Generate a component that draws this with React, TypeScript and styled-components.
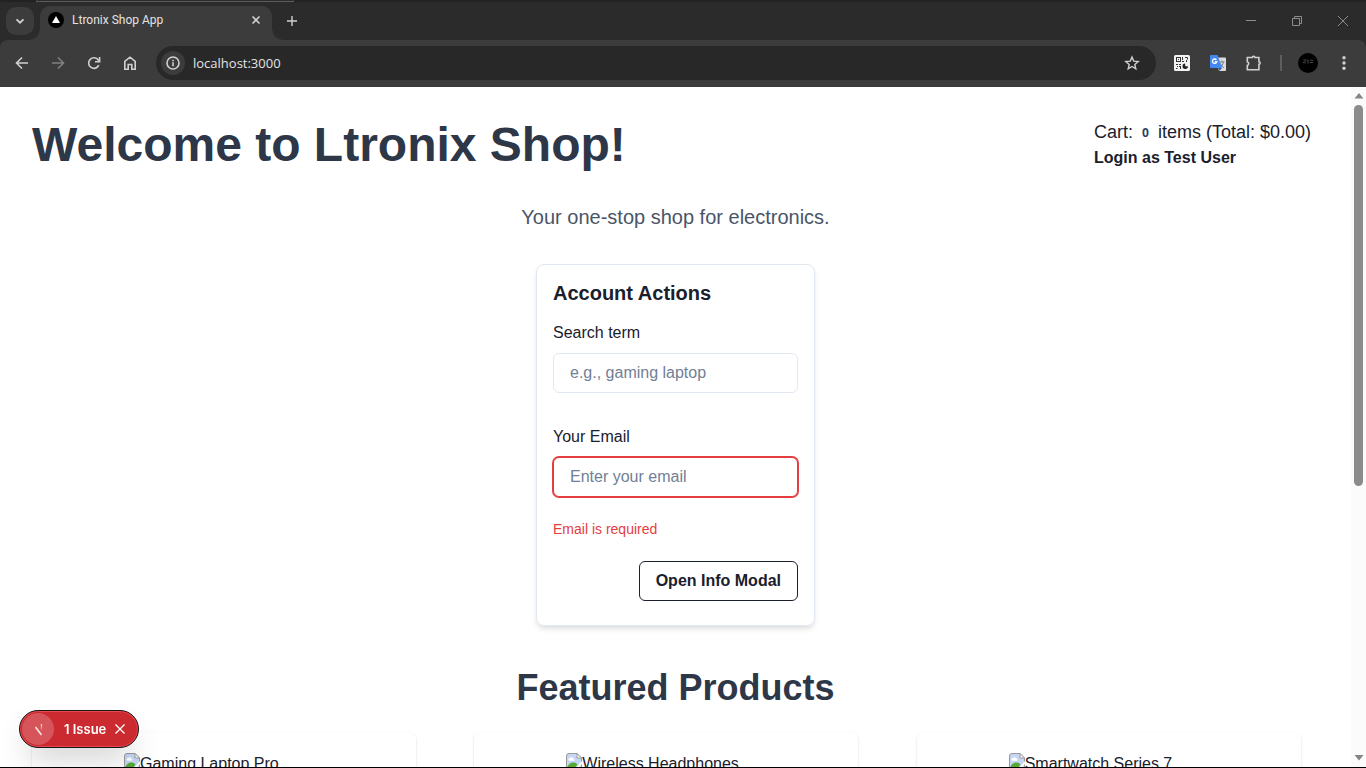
import React from "react";
import styled, { createGlobalStyle, css } from "styled-components";

const GlobalStyle = createGlobalStyle`
  *, *::before, *::after { box-sizing: border-box; }
  body {
    margin: 0;
    background: #ffffff;
    color: #1a202c;
    font-family: "Liberation Sans", Arial, sans-serif;
    font-size: 16px;
    line-height: 24px;
  }
  h1, h2, h3, p, figure { margin: 0; }
  button, input { font: inherit; color: inherit; }
  button { cursor: pointer; }
  svg { display: block; flex: none; }
`;

const Window = styled.div`
  display: flex;
  flex-direction: column;
  height: 100vh;
  overflow: hidden;
  border-bottom: 1px solid #000000;
`;

/* ---------- browser frame ---------- */

const Frame = styled.header`
  flex: none;
  background: #2b2b2b;
  font-family: "Open Sans", "Noto Sans", sans-serif;
  color: #e3e3e3;
`;

const TopEdge = styled.div`
  height: 2px;
  padding: 0 1072px 0 36px;
  background: #222222;

  &::before {
    content: "";
    display: block;
    height: 2px;
    border: 1px solid #5a5a5a;
    border-top-color: #2b2b2b;
  }
`;

const TabStrip = styled.div`
  display: flex;
  align-items: center;
  height: 38px;
  padding-left: 6px;
`;

const IconButton = styled.button<{ $size?: number; $dim?: boolean }>`
  display: flex;
  align-items: center;
  justify-content: center;
  flex: none;
  width: ${(p) => p.$size ?? 28}px;
  height: ${(p) => p.$size ?? 28}px;
  padding: 0;
  border: 0;
  border-radius: 50%;
  background: none;
  color: ${(p) => (p.$dim ? "#808080" : "#d0d0d0")};
`;

const TabSearch = styled(IconButton)`
  border-radius: 10px;
  background: #3c3c3c;
`;

const Tab = styled.div`
  position: relative;
  display: flex;
  align-items: center;
  align-self: flex-end;
  width: 232px;
  height: 34px;
  margin: 0 6px;
  padding: 0 6px 6px 8px;
  border-radius: 10px 10px 0 0;
  background: #3c3c3c;

  &::before,
  &::after {
    content: "";
    position: absolute;
    bottom: 0;
    width: 10px;
    height: 10px;
  }
  &::before {
    right: 100%;
    background: radial-gradient(circle at 0 0, transparent 9px, #3c3c3c 10px);
  }
  &::after {
    left: 100%;
    background: radial-gradient(circle at 100% 0, transparent 9px, #3c3c3c 10px);
  }
`;

const TabTitle = styled.span`
  flex: 1;
  margin-left: 8px;
  font-family: Roboto, "Open Sans", sans-serif;
  font-size: 12px;
  line-height: 16px;
  white-space: nowrap;
`;

const WindowControls = styled.div`
  display: flex;
  margin-left: auto;
`;

const WindowButton = styled.button`
  display: flex;
  align-items: center;
  justify-content: center;
  width: 46px;
  height: 34px;
  padding: 0;
  border: 0;
  background: none;
  color: #8c8c8c;
`;

const Toolbar = styled.div`
  display: flex;
  align-items: center;
  height: 47px;
  padding: 0 8px 2px;
  border-radius: 8px 8px 0 0;
  background: #3c3c3c;
`;

const NavButtons = styled.div`
  display: flex;
  gap: 8px;
`;

const AddressBar = styled.div`
  display: flex;
  align-items: center;
  flex: 1;
  height: 34px;
  margin: 0 12px;
  padding: 0 10px 0 5px;
  border-radius: 17px;
  background: #282828;
`;

const SiteInfo = styled(IconButton)`
  background: #3c3c3c;
`;

const Address = styled.input`
  flex: 1;
  min-width: 0;
  margin-left: 8px;
  padding: 0;
  border: 0;
  outline: 0;
  background: none;
  color: #e3e3e3;
  font-size: 13px;
  line-height: 20px;
`;

const Extensions = styled.div`
  display: flex;
  align-items: center;
  gap: 8px;
`;

const Divider = styled.span`
  width: 2px;
  height: 16px;
  margin: 0 4px;
  background: #5e5e5e;
`;

/* ---------- page ---------- */

const Viewport = styled.div`
  display: flex;
  flex: 1;
  min-height: 0;
`;

const Page = styled.main`
  flex: 1;
  min-width: 0;
  padding: 32px;
  overflow: hidden;
`;

const PageHeader = styled.div`
  display: flex;
  justify-content: space-between;
  align-items: flex-start;
`;

const Title = styled.h1`
  color: #2d3748;
  font-size: 48px;
  line-height: 51px;
`;

const CartBox = styled.div`
  padding-right: 8px;
`;

const CartLine = styled.p`
  font-size: 18px;
  line-height: 27px;
`;

const CartCount = styled.span`
  display: inline-block;
  padding: 0 4px;
  color: #2a4365;
  font-family: "Open Sans", "Noto Sans", sans-serif;
  font-size: 12px;
  line-height: 18px;
  font-weight: 700;
  vertical-align: middle;
`;

const LoginButton = styled.button`
  display: block;
  padding: 0;
  border: 0;
  background: none;
  font-weight: 700;
  line-height: 24px;
`;

const Tagline = styled.p`
  margin-top: 32px;
  color: #4a5568;
  font-size: 20px;
  line-height: 30px;
  text-align: center;
`;

const AccountCard = styled.form`
  display: flex;
  flex-direction: column;
  width: 279px;
  margin: 32px auto 40px;
  padding: 16px 16px 24px;
  border: 1px solid #e2e8f0;
  border-radius: 8px;
  box-shadow: 0 4px 6px -1px rgba(0, 0, 0, 0.1), 0 2px 4px -1px rgba(0, 0, 0, 0.06);
`;

const CardTitle = styled.h3`
  margin-bottom: 16px;
  font-size: 20px;
  line-height: 24px;
`;

const Field = styled.div`
  display: flex;
  flex-direction: column;
  gap: 8px;

  & + & {
    margin-top: 32px;
  }
`;

const TextInput = styled.input<{ $invalid?: boolean }>`
  width: 100%;
  height: 40px;
  padding: 0 16px;
  border: 1px solid #e2e8f0;
  border-radius: 6px;
  outline: 0;
  background: #ffffff;

  &::placeholder {
    color: #718096;
    opacity: 1;
  }

  ${(p) =>
    p.$invalid &&
    css`
      border-color: #e53e3e;
      box-shadow: 0 0 0 1px #e53e3e;
    `}
`;

const FieldError = styled.p`
  margin: 24px 0;
  color: #e53e3e;
  font-size: 14px;
  line-height: 16px;
`;

const OutlineButton = styled.button`
  align-self: flex-end;
  height: 40px;
  padding: 0 16px;
  border: 1px solid #1a202c;
  border-radius: 6px;
  background: none;
  font-weight: 700;
`;

const SectionTitle = styled.h2`
  margin-bottom: 24px;
  color: #2d3748;
  font-size: 36px;
  line-height: 43px;
  text-align: center;
`;

const ProductGrid = styled.div`
  display: grid;
  grid-template-columns: repeat(3, 1fr);
  gap: 40px;
`;

const ProductCard = styled.article`
  display: flex;
  justify-content: center;
  max-width: 384px;
  height: 380px;
  padding: 20px;
  border-radius: 6px;
  box-shadow: 0 1px 3px 0 rgba(0, 0, 0, 0.1), 0 1px 2px 0 rgba(0, 0, 0, 0.06);
`;

const ProductImage = styled.figure`
  display: flex;
  align-items: flex-start;
  width: 200px;
  height: 200px;
  line-height: 22px;
  white-space: nowrap;
`;

/* ---------- scrollbar ---------- */

const Scrollbar = styled.div`
  display: flex;
  flex-direction: column;
  align-items: center;
  flex: none;
  width: 15px;
  padding: 6px 0;
  background: #fbfbfb;
`;

const Track = styled.div`
  flex: 1;
  width: 9px;
  margin: 6px 0 4px;
`;

const Thumb = styled.div`
  height: 59%;
  border-radius: 5px;
  background: #8b8b8b;
`;

/* ---------- dev issue toast ---------- */

const IssueToast = styled.div`
  position: fixed;
  left: 19px;
  bottom: 20px;
  display: flex;
  align-items: center;
  height: 38px;
  padding: 0 11px 0 1px;
  border: 1px solid #171717;
  border-radius: 19px;
  background: #ca2a30;
  box-shadow: inset 0 0 0 1px #e5484d, 0 16px 32px -8px rgba(0, 0, 0, 0.24);
  color: #ffffff;
  font-family: Inter, "Liberation Sans", sans-serif;
  font-size: 13px;
  font-weight: 600;
`;

const IssueLogo = styled.button`
  display: flex;
  align-items: center;
  justify-content: center;
  width: 32px;
  height: 32px;
  margin: 0 10px 0 1px;
  padding: 0;
  border: 0;
  border-radius: 50%;
  background: #d5555a;
`;

const IssueText = styled.button`
  padding: 0;
  border: 0;
  background: none;
  line-height: 16px;
`;

const IssueClose = styled.button`
  display: flex;
  margin-left: 7px;
  padding: 0;
  border: 0;
  background: none;
`;

/* ---------- icons ---------- */

type StrokeProps = { size?: number; width?: number; children: React.ReactNode };

const Stroke = ({ size = 16, width = 1.6, children }: StrokeProps) => (
  <svg
    width={size}
    height={size}
    viewBox={`0 0 ${size} ${size}`}
    fill="none"
    stroke="currentColor"
    strokeWidth={width}
    aria-hidden="true"
  >
    {children}
  </svg>
);

const Favicon = () => (
  <svg width="16" height="16" viewBox="0 0 16 16" aria-hidden="true">
    <circle cx="8" cy="8" r="8" fill="#000" />
    <path d="M8 4 12 11H4z" fill="#fff" />
  </svg>
);

const QrIcon = () => (
  <svg width="16" height="16" viewBox="0 0 16 16" aria-hidden="true">
    <rect width="16" height="16" rx="1.500" fill="#f2f2f2" />
    <g fill="none" stroke="#333" strokeWidth="1">
      <rect x="2.500" y="2.500" width="4" height="4" />
      <path d="M8.500 2v3M8 6.500h2M11 2.500h2.500v2M12.500 5v2M2 9.500h2M5 9.500h2M3.500 11v1M2 13.500h1.500M5 11.500h2M6.500 12v2" />
    </g>
    <path d="M4 4h1v1H4z" fill="#333" />
    <path d="M11.200 8.600v2.600h2.700a2.700 2.700 0 1 1-2.700-2.600z" fill="#222" />
  </svg>
);

const TranslateIcon = () => (
  <svg width="16" height="16" viewBox="0 0 16 16" aria-hidden="true">
    <path d="M6 2.500h9a1 1 0 0 1 1 1V15a1 1 0 0 1-1 1H9z" fill="#dcdcdc" />
    <path d="M9.500 7h5M12 5.500V7M13.500 7c-.6 2.600-2 4.400-3.500 5.500M10.500 8.500c.8 2 2 3.300 3.500 4.300" fill="none" stroke="#6f8790" strokeWidth="1" />
    <path d="M1 0h6.500L12 13H1a1 1 0 0 1-1-1V1a1 1 0 0 1 1-1z" fill="#4688f1" />
    <path d="M8.500 13H12l-2.500 3z" fill="#2a56c6" />
    <path d="M6.400 4.900A2.200 2.200 0 1 0 6.800 6.600H4.800" fill="none" stroke="#fff" strokeWidth="1.300" />
  </svg>
);

const AvatarIcon = () => (
  <svg width="20" height="20" viewBox="0 0 20 20" aria-hidden="true">
    <circle cx="10" cy="10" r="10" fill="#000" />
    <path d="M5.500 7h3M7 8v2.500M10 6.500v4M12 7l3 .5M12 9.500h3M5 9.500h1" stroke="#484848" strokeWidth="1" fill="none" />
  </svg>
);

const BrokenImage = () => (
  <svg width="16" height="16" viewBox="0 0 16 16" aria-hidden="true">
    <path d="M.5 15.500V3a2.500 2.500 0 0 1 2.500-2.500h8l4.500 4.500v10.500z" fill="#c6d6f5" stroke="#9a9a9a" />
    <path d="M11 .5V5h4.500z" fill="#fff" stroke="#9a9a9a" />
    <path d="M2.500 7a1.500 1.500 0 0 1 1.500-2 2 2 0 0 1 3.500.5 1.200 1.200 0 0 1 0 2.300H3.500z" fill="#fff" />
    <path d="M1 15c1-4 4-5.500 6.500-5.500 2 0 3 .8 4 2L9 15z" fill="#56ab35" />
    <path d="M9 16l7-8v3l-4.500 5z" fill="#fff" />
  </svg>
);

const Arrow = ({ up }: { up?: boolean }) => (
  <svg width="10" height="6" viewBox="0 0 10 6" aria-hidden="true">
    <path d={up ? "M5 0l4.500 5.500h-9z" : "M5 5.500l4.500-5.500h-9z"} fill="#858585" />
  </svg>
);

const products = ["Gaming Laptop Pro", "Wireless Headphones", "Smartwatch Series 7"];

export default function App() {
  return (
    <Window>
      <GlobalStyle />

      <Frame>
        <TopEdge />
        <TabStrip>
          <TabSearch aria-label="Search tabs">
            <Stroke size={10} width={1.8}><path d="M1.500 3.300 5 6.700l3.500-3.400" /></Stroke>
          </TabSearch>
          <Tab>
            <Favicon />
            <TabTitle>Ltronix Shop App</TabTitle>
            <IconButton $size={20} aria-label="Close tab">
              <Stroke size={10}><path d="M1.500 1.500l7 7M8.500 1.500l-7 7" /></Stroke>
            </IconButton>
          </Tab>
          <IconButton aria-label="New tab">
            <Stroke size={12} width={1.4}><path d="M6 1v10M1 6h10" /></Stroke>
          </IconButton>
          <WindowControls>
            <WindowButton aria-label="Minimize">
              <Stroke size={10} width={1}><path d="M0 4.500h10" /></Stroke>
            </WindowButton>
            <WindowButton aria-label="Restore">
              <Stroke size={10} width={1}><path d="M.5 2.500h7v7h-7zM2.500 2.500v-2h7v7h-2" /></Stroke>
            </WindowButton>
            <WindowButton aria-label="Close">
              <Stroke size={10} width={1}><path d="M0 0l10 10M10 0 0 10" /></Stroke>
            </WindowButton>
          </WindowControls>
        </TabStrip>

        <Toolbar>
          <NavButtons>
            <IconButton aria-label="Back">
              <Stroke><path d="M14 8H3M8 2.500 2.500 8 8 13.500" /></Stroke>
            </IconButton>
            <IconButton $dim aria-label="Forward">
              <Stroke><path d="M2 8h11M8 2.500 13.500 8 8 13.500" /></Stroke>
            </IconButton>
            <IconButton aria-label="Reload">
              <Stroke><path d="M12.800 10.200A5.300 5.300 0 1 1 12.300 5l1 1.500M13.600 2v4.700H9" /></Stroke>
            </IconButton>
            <IconButton aria-label="Home">
              <Stroke><path d="M2.800 6.300 8 2.200l5.200 4.100v7.900H9.800V9.500H6.200v4.700H2.800z" /></Stroke>
            </IconButton>
          </NavButtons>
          <AddressBar>
            <SiteInfo $size={24} aria-label="Site information">
              <Stroke>
                <circle cx="8" cy="8" r="6" />
                <path d="M8 7.300V11.200M8 4.800v1.500" />
              </Stroke>
            </SiteInfo>
            <Address aria-label="Address" defaultValue="localhost:3000" />
            <IconButton aria-label="Bookmark this page">
              <Stroke width={1.4}>
                <path d="M8 2l1.700 4.100 4.500.4-3.400 2.900 1 4.400L8 11.500l-3.800 2.300 1-4.400-3.400-2.900 4.500-.4z" />
              </Stroke>
            </IconButton>
          </AddressBar>
          <Extensions>
            <IconButton aria-label="QR code extension"><QrIcon /></IconButton>
            <IconButton aria-label="Translate extension"><TranslateIcon /></IconButton>
            <IconButton aria-label="Extensions">
              <Stroke size={18}>
                <path d="M2.300 3.500h5a1.300 1.300 0 0 1 2.600 0h4v4.300a1.300 1.300 0 0 1 0 2.600v5.300H2.300v-4.200a2 2 0 0 0 0-3.800z" />
              </Stroke>
            </IconButton>
            <Divider />
            <IconButton aria-label="Profile"><AvatarIcon /></IconButton>
            <IconButton aria-label="Menu">
              <svg width="16" height="16" viewBox="0 0 16 16" fill="currentColor" aria-hidden="true">
                <circle cx="8" cy="2.800" r="1.700" />
                <circle cx="8" cy="8" r="1.700" />
                <circle cx="8" cy="13.200" r="1.700" />
              </svg>
            </IconButton>
          </Extensions>
        </Toolbar>
      </Frame>

      <Viewport>
        <Page>
          <PageHeader>
            <Title>Welcome to Ltronix Shop!</Title>
            <CartBox>
              <CartLine>
                Cart: <CartCount>0</CartCount> items (Total: $0.00)
              </CartLine>
              <LoginButton>Login as Test User</LoginButton>
            </CartBox>
          </PageHeader>

          <Tagline>Your one-stop shop for electronics.</Tagline>

          <AccountCard noValidate onSubmit={(e) => e.preventDefault()}>
            <CardTitle>Account Actions</CardTitle>
            <Field>
              <label htmlFor="search">Search term</label>
              <TextInput id="search" placeholder="e.g., gaming laptop" />
            </Field>
            <Field>
              <label htmlFor="email">Your Email</label>
              <TextInput
                id="email"
                type="email"
                placeholder="Enter your email"
                $invalid
                aria-invalid="true"
                aria-describedby="email-error"
              />
            </Field>
            <FieldError id="email-error">Email is required</FieldError>
            <OutlineButton type="button">Open Info Modal</OutlineButton>
          </AccountCard>

          <SectionTitle>Featured Products</SectionTitle>
          <ProductGrid>
            {products.map((name) => (
              <ProductCard key={name}>
                <ProductImage>
                  <BrokenImage />
                  {name}
                </ProductImage>
              </ProductCard>
            ))}
          </ProductGrid>
        </Page>

        <Scrollbar aria-hidden="true">
          <Arrow up />
          <Track>
            <Thumb />
          </Track>
          <Arrow />
        </Scrollbar>
      </Viewport>

      <IssueToast>
        <IssueLogo aria-label="Open developer tools">
          <svg width="14" height="14" viewBox="0 0 14 14" fill="none" aria-hidden="true">
            <defs>
              <linearGradient id="fadeDown" x1="0" y1="0" x2="0" y2="1">
                <stop offset="0" stopColor="#fff" stopOpacity="0.800" />
                <stop offset="1" stopColor="#fff" stopOpacity="0" />
              </linearGradient>
            </defs>
            <path d="M4.500 5 10.500 13" stroke="#fff" strokeOpacity="0.850" strokeWidth="1.500" />
            <path d="M9.800 2h1.300v7H9.800z" fill="url(#fadeDown)" />
          </svg>
        </IssueLogo>
        <IssueText>1 Issue</IssueText>
        <IssueClose aria-label="Dismiss">
          <Stroke size={14} width={1.3}><path d="M2.500 2.500l9 9M11.500 2.500l-9 9" /></Stroke>
        </IssueClose>
      </IssueToast>
    </Window>
  );
}
